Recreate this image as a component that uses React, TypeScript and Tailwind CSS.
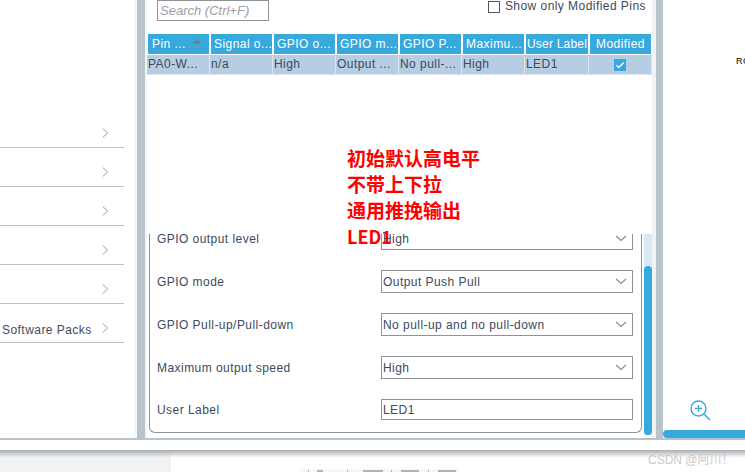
const ui = "font-['Liberation_Sans',Arial,sans-serif]"

const columns = ['Pin ...', 'Signal o...', 'GPIO o...', 'GPIO m...', 'GPIO P...', 'Maximu...', 'User Label']
const values = ['PA0-W...', 'n/a', 'High', 'Output ...', 'No pull-...', 'High', 'LED1']

const navRows = ['', '', '', '', '', 'Software Packs']

const formRows = [
  { label: 'GPIO mode', value: 'Output Push Pull' },
  { label: 'GPIO Pull-up/Pull-down', value: 'No pull-up and no pull-down' },
  { label: 'Maximum output speed', value: 'High' },
]

// tops of a cut-off toolbar at the very bottom edge
const stubs = [
  { w: 1, gap: 8 },
  { w: 6, gap: 24 },
  { w: 1, gap: 15 },
  { w: 20, gap: 8 },
  { w: 1, gap: 9 },
  { w: 18, gap: 9 },
  { w: 1, gap: 9 },
  { w: 18, gap: 7 },
]

function Chevron({ className }: { className: string }) {
  return (
    <svg className={className} viewBox="0 0 8 12" fill="none" stroke="#8a9298" strokeWidth="1">
      <path d="M1 1l5.5 5L1 11" />
    </svg>
  )
}

function DownArrow() {
  return (
    <svg className="mr-[5px] h-[7px] w-[12px]" viewBox="0 0 12 7" fill="none" stroke="#868e94" strokeWidth="1.2">
      <path d="M1 1l5 4.5L11 1" />
    </svg>
  )
}

function Select({ value }: { value: string }) {
  return (
    <div className="flex h-[23px] w-[252px] shrink-0 items-center justify-between border border-[#8d9396] pl-[1px]">
      <span>{value}</span>
      <DownArrow />
    </div>
  )
}

function NavPanel() {
  return (
    <div className="flex w-[137px] shrink-0 flex-col border-r-[3px] border-[#f3f5f7] pt-[109px]">
      {navRows.map((text, i) => (
        <div key={i} className="flex h-[39px] w-[124px] shrink-0 items-center justify-between border-b border-[#b8c4cb] pl-[2px] pr-[15px] pt-[9px]">
          <span className="mt-[4px]">{text}</span>
          <Chevron className="h-[12px] w-[7px]" />
        </div>
      ))}
    </div>
  )
}

function PinTable() {
  return (
    <div className="ml-[1px] w-[504px] whitespace-nowrap">
      <div className="grid h-[20px] grid-cols-[61px_61px_61px_61px_61px_61px_62px_61px] gap-x-[2px] text-white">
        {columns.map((c, i) => (
          <div key={c} className={`flex items-center justify-between overflow-hidden bg-[#38a9dd] ${i === 6 ? 'pl-[1px] tracking-[0.2px]' : 'pl-[3px]'}`}>
            <span className={i === 0 ? 'pl-[1px]' : ''}>{c}</span>
            {i === 0 && (
              <svg className="mr-[8px] h-[11px] w-[8px] shrink-0" viewBox="0 0 8 11">
                <path d="M4 0l4 4.5H0z" fill="#64808f" />
                <path d="M4 11L0 6.5h8z" fill="#6a9cb8" />
              </svg>
            )}
          </div>
        ))}
        <div className="flex items-center justify-center bg-[#38a9dd]">Modified</div>
      </div>
      <div className="mt-[1px] -ml-[1px] grid h-[20px] w-[505px] grid-cols-[62px_62px_62px_62px_62px_62px_63px_62px] gap-x-[1px] border-b border-[#dce5ef] bg-[#dce5ef]">
        {values.map((v, i) => (
          <div key={i} className="overflow-hidden bg-[#b7cde4] pl-[1px] leading-[19px]">{v}</div>
        ))}
        <div className="flex items-center justify-center bg-[#b7cde4]">
          <div className="flex h-[12px] w-[12px] items-center justify-center bg-[#38a9dd]">
            <svg className="h-[10px] w-[10px]" viewBox="0 0 10 10" fill="none" stroke="#fff" strokeWidth="1.5">
              <path d="M1.5 5.2l2.3 2.3 4.8-5" />
            </svg>
          </div>
        </div>
      </div>
    </div>
  )
}

function ConfigBox() {
  return (
    <div className="ml-[2px] mt-[159px] flex h-[201px] w-[505px] shrink-0">
      <div className="h-[199px] w-[493px] shrink-0 overflow-hidden rounded-b-[6px] border-x border-b border-[#8d9396] pl-[7px] pr-[8px]">
        <div className="-mt-[7px] flex h-[23px] items-center justify-between">
          <span>GPIO output level</span>
          <Select value="High" />
        </div>
        <div className="mt-[20px] flex flex-col gap-[20px]">
          {formRows.map(row => (
            <div key={row.label} className="flex h-[23px] items-center justify-between">
              <span>{row.label}</span>
              <Select value={row.value} />
            </div>
          ))}
        </div>
        <div className="mt-[20px] flex h-[21px] items-center justify-between">
          <span>User Label</span>
          <div className="flex h-[21px] w-[252px] items-center border border-[#8d9396] pl-[1px]">LED1</div>
        </div>
      </div>
      <div className="ml-[2px] flex w-[8px] flex-col bg-[#d9e8f5]">
        <div className="mt-[32px] h-[169px] rounded-[4px] bg-[#38a9dd]"></div>
      </div>
    </div>
  )
}

function CenterPanel() {
  return (
    <div className="flex w-[505px] shrink-0 flex-col">
      <div className="flex h-[34px] shrink-0 items-start justify-between pl-[10px] pr-[6px]">
        <div className="flex h-[21px] w-[112px] items-center border border-[#8d9396] pl-[2px] text-[13px] italic tracking-normal text-[#9aa0a5]">Search (Ctrl+F)</div>
        <label className="flex items-center gap-[5px]">
          <span className="mt-[1px] h-[12px] w-[12px] border border-[#555]"></span>
          <span className="-mt-[1px]">Show only Modified Pins</span>
        </label>
      </div>
      <PinTable />
      <ConfigBox />
    </div>
  )
}

function RightPanel() {
  return (
    <div className="flex w-[82px] shrink-0 flex-col overflow-hidden">
      <div className="mt-[56px] h-[11px] pl-[73px] text-[9px] leading-[11px] text-black">RC</div>
      <div className="mt-[332px] pl-[26px]">
        <svg className="h-[22px] w-[22px]" viewBox="0 0 22 22" fill="none" stroke="#38a9dd" strokeWidth="1.4">
          <circle cx="9.5" cy="9.5" r="7.5" />
          <path d="M9.5 6v7M6 9.5h7" />
          <path d="M15 15l6 6" />
        </svg>
      </div>
      <div className="mt-[9px] h-[8px] rounded-l-[4px] bg-[#38a9dd]"></div>
    </div>
  )
}

function BottomStrip() {
  return (
    <div className="relative flex h-[22px] overflow-hidden">
      <div className="w-[171px] bg-gradient-to-b from-[#a9adb0] to-[#f1f2f4] to-[35%]"></div>
      <div className="flex-1 bg-gradient-to-b from-[#a9adb0] to-white to-[35%]"></div>
      <div className="absolute left-[648px] top-[3px] text-[12px] tracking-normal text-[#c9c9c9] font-['Liberation_Sans','Noto_Sans_CJK_SC',sans-serif]">CSDN @阿川！</div>
      <div className="absolute left-[300px] top-[19px] flex h-[3px] w-[158px] items-end bg-[#f6f6f6] pl-[8px]">
        {stubs.map((s, i) => (
          <span key={i} className="h-[2px] shrink-0 bg-[#b4b4b4]" style={{ width: s.w, marginRight: s.gap }}></span>
        ))}
      </div>
    </div>
  )
}

export default function App() {
  return (
    <div className={`relative h-[472px] w-[745px] overflow-hidden bg-white text-[12px] leading-[14px] tracking-[0.45px] text-[#3c4a5a] ${ui}`}>
      <div className="flex h-[440px] border-b-[2px] border-[#b8c4cb]">
        <NavPanel />
        <div className="flex w-[526px] shrink-0">
          <div className="w-[8px] shrink-0 bg-[#b8c4cb]"></div>
          <div className="w-[2px] shrink-0 bg-[#f3f5f7]"></div>
          <CenterPanel />
          <div className="w-[4px] shrink-0 bg-[#f0f2f4]"></div>
          <div className="w-[7px] shrink-0 bg-[#b8c4cb]"></div>
        </div>
        <RightPanel />
      </div>
      <div className="h-[10px]"></div>
      <BottomStrip />

      <div className="absolute left-[347px] top-[145px] text-[19px] font-bold leading-[26px] tracking-normal text-[#ff0000] font-['Noto_Sans_CJK_SC',sans-serif]">
        <div>初始默认高电平</div>
        <div>不带上下拉</div>
        <div>通用推挽输出</div>
        <div className="text-[18px]">LED1</div>
      </div>
    </div>
  )
}
